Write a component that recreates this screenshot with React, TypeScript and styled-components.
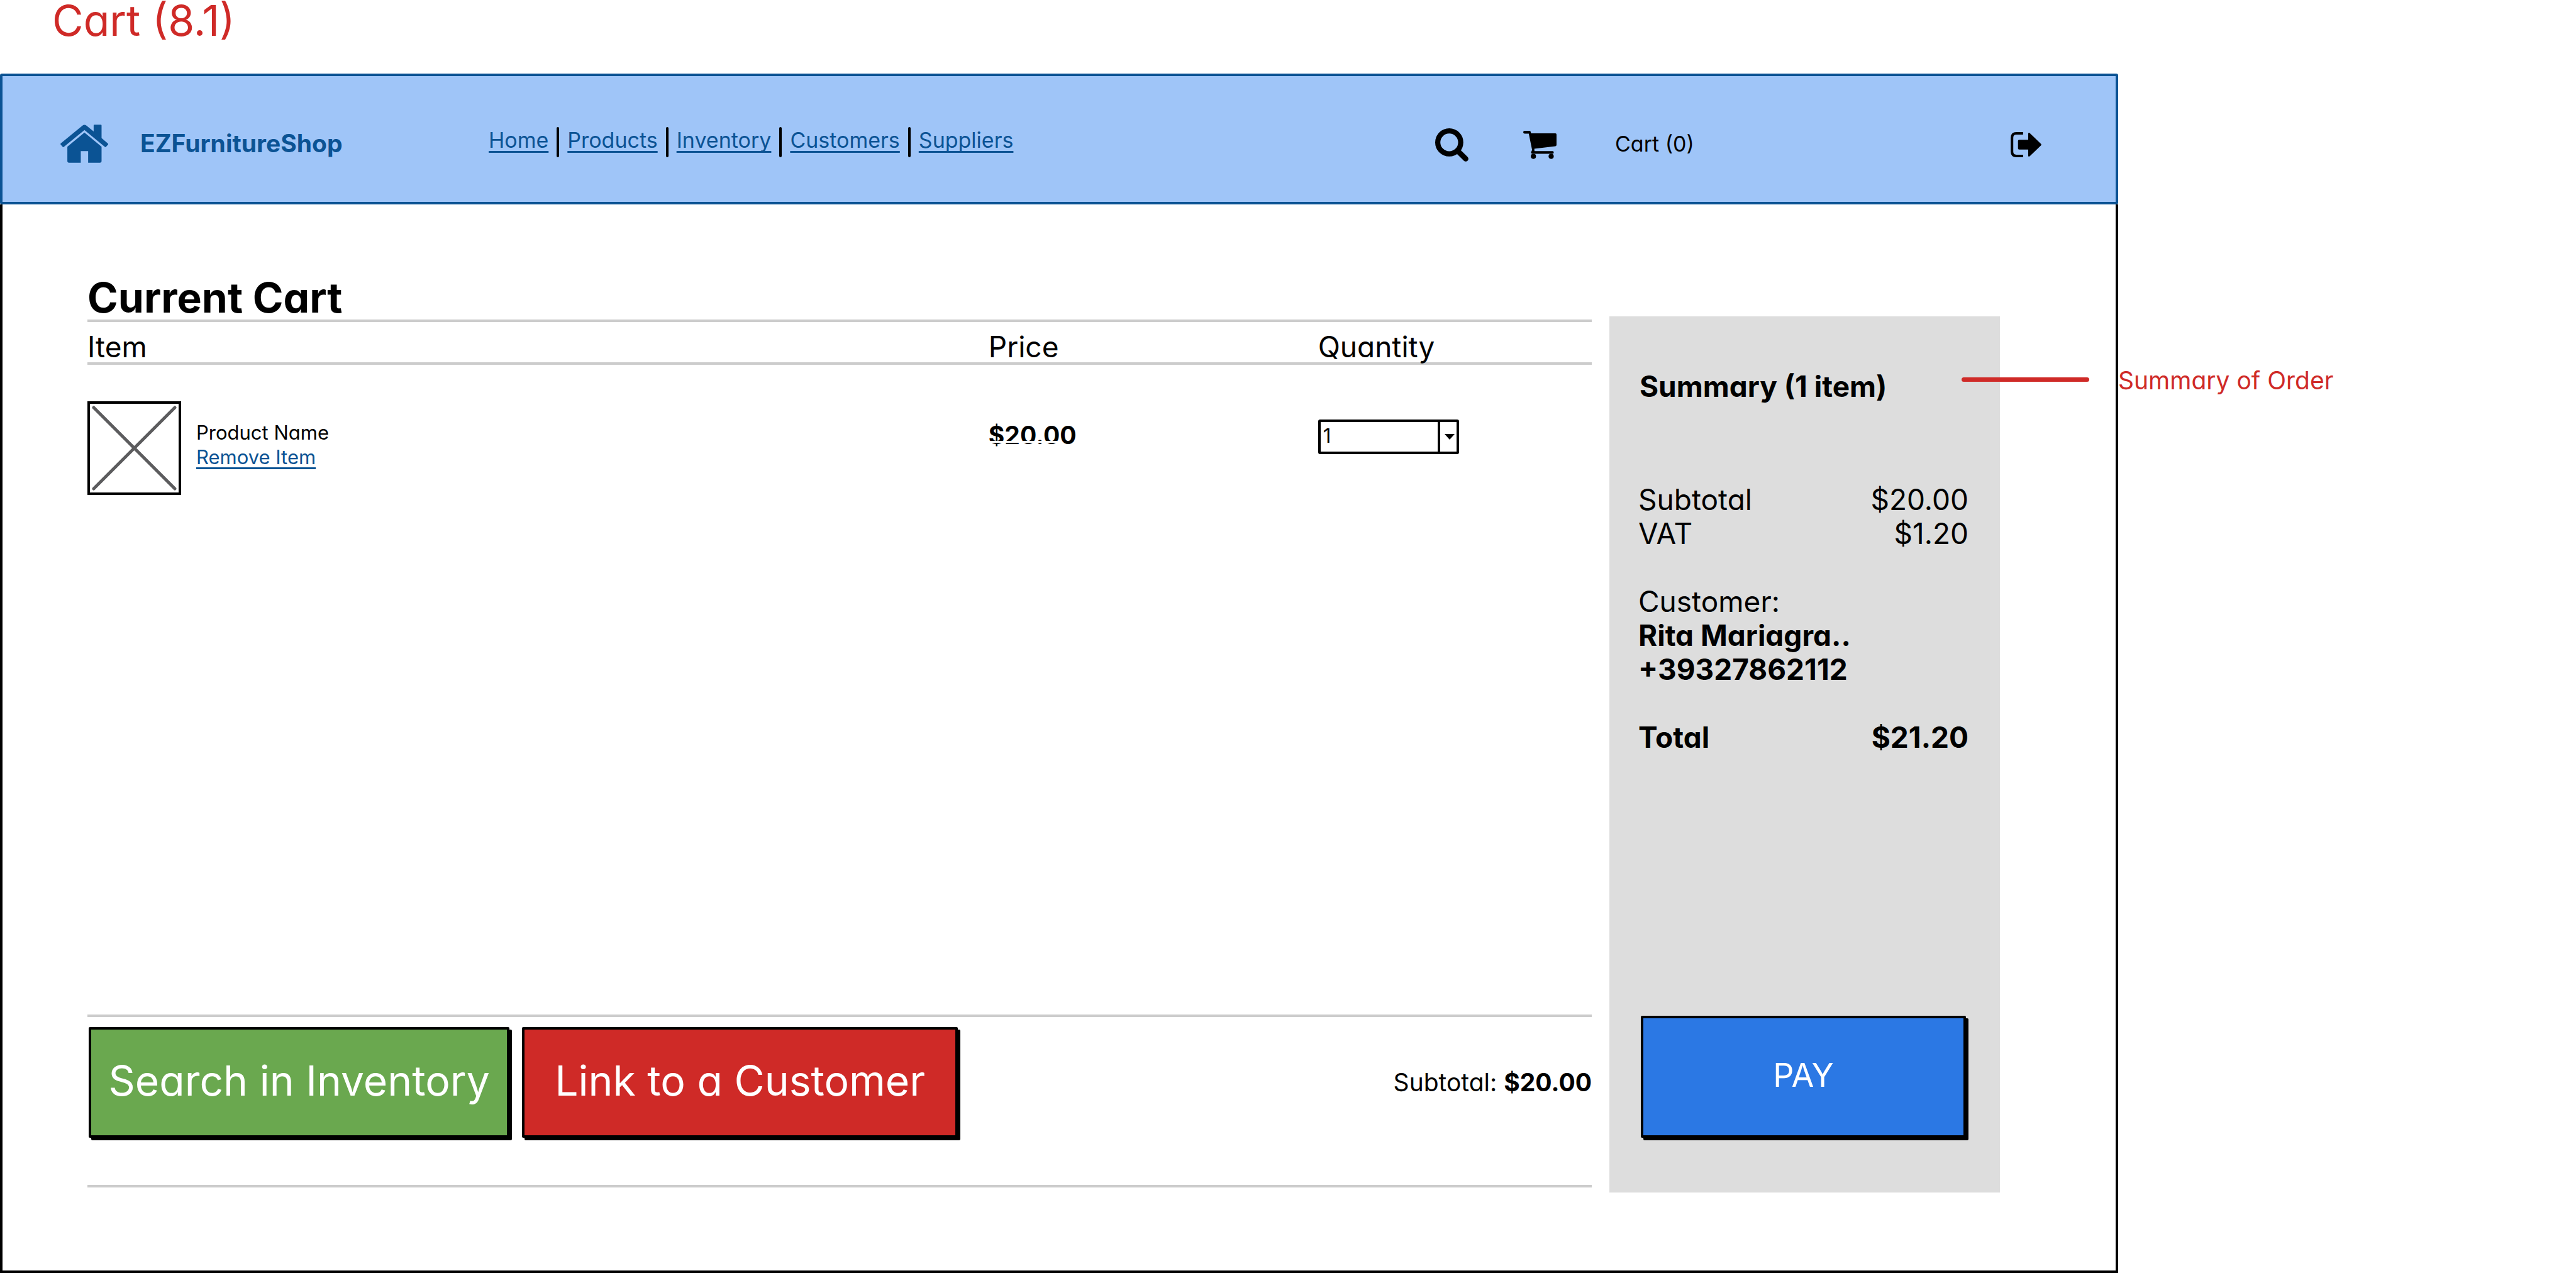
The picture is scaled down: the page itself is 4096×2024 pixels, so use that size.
import React from "react";
import styled, { createGlobalStyle } from "styled-components";

const color = {
  ink: "#000000",
  paper: "#ffffff",
  navy: "#0b5394",
  sky: "#9fc5f8",
  red: "#cf2a27",
  green: "#6aa84f",
  blue: "#2b78e4",
  panel: "#dddddd",
  rule: "#cccccc",
  cross: "#5c5c5e",
};

const size = { title: "68px", xl: "66px", pay: "52px", lg: "46px", md: "39px", nav: "34px", sm: "31px" };

const GlobalStyle = createGlobalStyle`
  *, *::before, *::after { box-sizing: border-box; }
  body { margin: 0; background: ${color.paper}; }
  body, button, select {
    font-family: Inter, "Liberation Sans", sans-serif;
    font-feature-settings: "cv11";
    color: ${color.ink};
  }
  h1, h2, p, ul, dl, dd { margin: 0; padding: 0; }
`;

const Page = styled.div`
  display: flex;
  flex-direction: column;
  min-height: 100vh;
`;

const PageTitle = styled.h1`
  height: 117px;
  padding-left: 83px;
  font-size: ${size.title};
  font-weight: 400;
  line-height: 64px;
  color: ${color.red};
`;

const Board = styled.div`
  flex: 1;
  display: grid;
  grid-template-columns: 3368fr 728fr;
`;

const Frame = styled.div`
  display: flex;
  flex-direction: column;
`;

const Header = styled.header`
  display: grid;
  grid-template-columns: 126fr 555fr 1505fr 140fr 146fr 629fr 167fr;
  align-items: center;
  height: 208px;
  padding: 14px 0 0 92px;
  background: ${color.sky};
  border: 4px solid ${color.navy};
  border-radius: 3px;
`;

const IconLink = styled.a`
  display: flex;
  color: ${color.navy};
`;

const IconButton = styled.button`
  display: flex;
  padding: 4px 0 0;
  border: 0;
  background: none;
  justify-self: start;
`;

const Brand = styled.span`
  padding-left: 1px;
  font-size: ${size.md};
  font-weight: 700;
  line-height: 48px;
  color: ${color.navy};
`;

const NavList = styled.ul`
  display: flex;
  gap: 13px;
  padding-bottom: 4px;
  list-style: none;
`;

const NavItem = styled.li`
  display: flex;
  gap: 13px;
  height: 48px;
  font-size: ${size.nav};
  line-height: 42px;

  &:not(:last-child)::after {
    content: "";
    width: 4px;
    border-radius: 2px;
    background: ${color.ink};
  }
`;

const TextLink = styled.a`
  color: ${color.navy};
  text-decoration: underline;
  text-decoration-thickness: 3px;
  text-decoration-skip-ink: none;
  text-underline-offset: 5px;
`;

const CartCount = styled.span`
  padding-top: 2px;
  font-size: ${size.nav};
  line-height: 48px;
`;

const Main = styled.main`
  flex: 1;
  display: grid;
  grid-template-columns: 2392fr 621fr;
  column-gap: 28px;
  padding: 113px 184px 124px 135px;
  border: 4px solid ${color.ink};
  border-top: 0;
`;

const Cart = styled.section`
  display: flex;
  flex-direction: column;
  padding-bottom: 8px;
`;

const Heading = styled.h2`
  font-size: ${size.xl};
  line-height: 70px;
`;

const Items = styled.table`
  width: 100%;
  table-layout: fixed;
  border-collapse: separate;
  border-spacing: 0;
`;

const HeadCell = styled.th<{ $width: string }>`
  width: ${(p) => p.$width};
  height: 72px;
  padding: 14px 0 0;
  border: solid ${color.rule};
  border-width: 4px 0;
  font-size: ${size.lg};
  font-weight: 400;
  line-height: 50px;
  text-align: left;
`;

const Cell = styled.td<{ $top: number }>`
  padding: ${(p) => p.$top}px 0 0;
  vertical-align: top;
`;

const Product = styled.div`
  display: flex;
  gap: 24px;
`;

const Thumb = styled.svg`
  width: 149px;
  height: 149px;
  border: 4px solid ${color.ink};
`;

const ProductText = styled.div`
  display: flex;
  flex-direction: column;
  padding-top: 30px;
  font-size: ${size.sm};
  line-height: 39px;
`;

const Price = styled.strong`
  position: relative;
  display: inline-block;
  font-size: ${size.md};
  line-height: 50px;

  &::after {
    content: "";
    position: absolute;
    left: 0;
    top: 34px;
    width: 80%;
    height: 3px;
    background: ${color.paper};
  }
`;

const SelectBox = styled.div`
  position: relative;
  width: 224px;
`;

const Select = styled.select`
  display: block;
  appearance: none;
  width: 100%;
  height: 55px;
  padding: 0 40px 4px 4px;
  border: 4px solid ${color.ink};
  border-radius: 3px;
  background: ${color.paper};
  font-size: ${size.sm};
`;

const SelectArrow = styled.span`
  position: absolute;
  top: 0;
  right: 0;
  bottom: 0;
  width: 34px;
  display: grid;
  place-items: center;
  border-left: 4px solid ${color.ink};
  pointer-events: none;
`;

const Actions = styled.footer`
  display: flex;
  align-items: center;
  gap: 20px;
  margin-top: auto;
  padding: 16px 0 75px 2px;
  border: solid ${color.rule};
  border-width: 4px 0;
`;

const ActionButton = styled.button<{ $fill: string; $width: string; $height?: number; $size?: string }>`
  width: ${(p) => p.$width};
  height: ${(p) => p.$height ?? 176}px;
  padding: 0 0 6px;
  border: 4px solid ${color.ink};
  border-radius: 2px;
  box-shadow: 4px 4px 0 ${color.ink};
  background: ${(p) => p.$fill};
  color: ${color.paper};
  font-size: ${(p) => p.$size ?? size.xl};
  white-space: nowrap;
`;

const CartSubtotal = styled.p`
  margin-left: auto;
  font-size: ${size.md};
  line-height: 48px;
`;

const Summary = styled.aside`
  display: flex;
  flex-direction: column;
  margin-top: 65px;
  padding: 84px 50px 87px 46px;
  background: ${color.panel};
  font-size: ${size.lg};
  line-height: 54px;
`;

const SummaryTitle = styled.h2`
  margin-bottom: 126px;
  padding-left: 2px;
  font-size: ${size.lg};
`;

const Totals = styled.dl`
  display: flex;
  flex-direction: column;
  margin-bottom: 54px;
`;

const TotalRow = styled.div<{ $bold?: boolean }>`
  display: flex;
  justify-content: space-between;
  font-weight: ${(p) => (p.$bold ? 700 : 400)};
`;

const Customer = styled.div`
  display: flex;
  flex-direction: column;
  margin-bottom: 54px;
`;

const PayArea = styled.div`
  display: flex;
  margin-top: auto;
  padding: 0 4px;
`;

const Notes = styled.div`
  padding-top: 464px;
`;

const Note = styled.p`
  position: relative;
  font-size: ${size.md};
  line-height: 48px;
  color: ${color.red};

  &::before {
    content: "";
    position: absolute;
    left: -249px;
    top: 19px;
    width: 203px;
    height: 7px;
    border-radius: 4px;
    background: ${color.red};
  }
`;

const HomeIcon = () => (
  <svg width="76" height="61" viewBox="0 0 260 207" fill="currentColor" aria-hidden="true">
    <path d="M2 102 120 5Q131-4 142 5L181 37V4Q181 0 185 0H220Q224 0 224 4V73L258 102Q262 106 259 109L249 120Q246 124 242 121L131 29 19 121Q15 124 12 120L2 109Q-1 105 2 102Z" />
    <path d="M131 43 224 120V198Q224 207 215 207H151V144H111V207H47Q38 207 38 198V120Z" />
  </svg>
);

const SearchIcon = () => (
  <svg width="53" height="53" viewBox="0 0 180 180" fill="none" stroke="currentColor" aria-hidden="true">
    <circle cx="76" cy="76" r="62" strokeWidth="28" />
    <path d="M122 122 165 165" strokeWidth="29" strokeLinecap="round" />
  </svg>
);

const CartIcon = () => (
  <svg width="53" height="45" viewBox="0 0 180 153" fill="currentColor" aria-hidden="true">
    <path d="M7 0H34Q41 0 42 14H174Q180 14 180 20V76Q180 82 174 83L60 97 61 110H159Q165 110 165 117 165 124 159 124H48Q41 124 42 116L48 104 30 15H7Q0 15 0 8 0 0 7 0Z" />
    <circle cx="55" cy="138" r="14" />
    <circle cx="151" cy="138" r="14" />
  </svg>
);

const ExitIcon = () => (
  <svg width="49" height="40" viewBox="0 0 168 138" fill="currentColor" aria-hidden="true">
    <path d="M68 7H31Q7 7 7 31V107Q7 131 31 131H68" fill="none" stroke="currentColor" strokeWidth="14" />
    <path d="M46 42H96V9Q97 0 105 6L166 65Q170 69 166 73L105 132Q97 138 96 129V96H46Q40 96 40 90V48Q40 42 46 42Z" />
  </svg>
);

const navLinks = ["Home", "Products", "Inventory", "Customers", "Suppliers"];

export default function App() {
  return (
    <Page>
      <GlobalStyle />
      <PageTitle>Cart (8.1)</PageTitle>
      <Board>
        <Frame>
          <Header>
            <IconLink href="#home" aria-label="Home page">
              <HomeIcon />
            </IconLink>
            <Brand>EZFurnitureShop</Brand>
            <nav>
              <NavList>
                {navLinks.map((name) => (
                  <NavItem key={name}>
                    <TextLink href={`#${name.toLowerCase()}`}>{name}</TextLink>
                  </NavItem>
                ))}
              </NavList>
            </nav>
            <IconButton aria-label="Search">
              <SearchIcon />
            </IconButton>
            <IconButton aria-label="Open cart">
              <CartIcon />
            </IconButton>
            <CartCount>Cart (0)</CartCount>
            <IconButton aria-label="Log out">
              <ExitIcon />
            </IconButton>
          </Header>
          <Main>
            <Cart>
              <Heading>Current Cart</Heading>
              <Items>
                <thead>
                  <tr>
                    <HeadCell $width="59.9%">Item</HeadCell>
                    <HeadCell $width="21.9%">Price</HeadCell>
                    <HeadCell $width="18.2%">Quantity</HeadCell>
                  </tr>
                </thead>
                <tbody>
                  <tr>
                    <Cell $top={58}>
                      <Product>
                        <Thumb viewBox="0 0 141 141" role="img" aria-label="Product picture">
                          <path d="M6 6 135 135M135 6 6 135" stroke={color.cross} strokeWidth="5" strokeLinecap="round" />
                        </Thumb>
                        <ProductText>
                          <span>Product Name</span>
                          <TextLink href="#remove">Remove Item</TextLink>
                        </ProductText>
                      </Product>
                    </Cell>
                    <Cell $top={87}>
                      <Price>$20.00</Price>
                    </Cell>
                    <Cell $top={87}>
                      <SelectBox>
                        <Select aria-label="Quantity" defaultValue="1">
                          <option>1</option>
                          <option>2</option>
                          <option>3</option>
                        </Select>
                        <SelectArrow>
                          <svg width="16" height="9" viewBox="0 0 16 9" aria-hidden="true">
                            <path d="M0 0H16L8 9Z" />
                          </svg>
                        </SelectArrow>
                      </SelectBox>
                    </Cell>
                  </tr>
                </tbody>
              </Items>
              <Actions>
                <ActionButton $fill={color.green} $width="28%">
                  Search in Inventory
                </ActionButton>
                <ActionButton $fill={color.red} $width="29%">
                  Link to a Customer
                </ActionButton>
                <CartSubtotal>
                  Subtotal: <strong>$20.00</strong>
                </CartSubtotal>
              </Actions>
            </Cart>
            <Summary>
              <SummaryTitle>Summary (1 item)</SummaryTitle>
              <Totals>
                <TotalRow>
                  <dt>Subtotal</dt>
                  <dd>$20.00</dd>
                </TotalRow>
                <TotalRow>
                  <dt>VAT</dt>
                  <dd>$1.20</dd>
                </TotalRow>
              </Totals>
              <Customer>
                <span>Customer:</span>
                <strong>Rita Mariagra..</strong>
                <strong>+39327862112</strong>
              </Customer>
              <Totals>
                <TotalRow $bold>
                  <dt>Total</dt>
                  <dd>$21.20</dd>
                </TotalRow>
              </Totals>
              <PayArea>
                <ActionButton $fill={color.blue} $width="100%" $height={194} $size={size.pay}>
                  PAY
                </ActionButton>
              </PayArea>
            </Summary>
          </Main>
        </Frame>
        <Notes>
          <Note>Summary of Order</Note>
        </Notes>
      </Board>
    </Page>
  );
}
